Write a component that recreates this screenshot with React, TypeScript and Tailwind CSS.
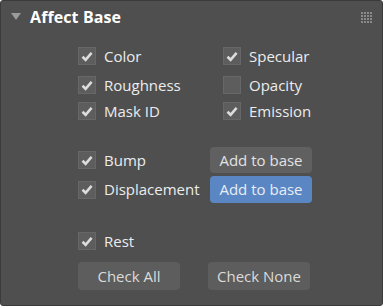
import { useState } from "react";

const font = { fontFamily: '"Open Sans", "Noto Sans", sans-serif' };

function Check({ label, checked, onToggle }: { label: string; checked: boolean; onToggle: () => void }) {
  return (
    <label className="flex items-center gap-2 h-[18px] cursor-pointer select-none" onClick={onToggle}>
      <span className="w-[18px] h-[18px] bg-[#5d5d5d] border border-[#676767] flex items-center justify-center">
        {checked && (
          <svg width="12" height="11" viewBox="0 0 12 11">
            <path d="M1.5 5.8 L4.6 8.8 L10.6 1.8" fill="none" stroke="#dcdcdc" strokeWidth="2.6" strokeLinejoin="miter" />
          </svg>
        )}
      </span>
      <span className="text-[15px] text-[#ececec] leading-none">{label}</span>
    </label>
  );
}

function Btn({ children, blue }: { children: string; blue?: boolean }) {
  return (
    <button
      className={`w-[102px] rounded-[4px] text-[15px] leading-none ${blue ? "bg-[#5a86c3] text-[#e8edf5] h-[27px]" : "bg-[#606060] text-[#e2e2e2] h-[26px]"}`}
    >
      {children}
    </button>
  );
}

export default function App() {
  const [state, setState] = useState<Record<string, boolean>>({
    Color: true,
    Specular: true,
    Roughness: true,
    Opacity: false,
    "Mask ID": true,
    Emission: true,
    Bump: true,
    Displacement: true,
    Rest: true,
  });
  const toggle = (k: string) => setState((s) => ({ ...s, [k]: !s[k] }));
  const c = (k: string) => <Check label={k} checked={state[k]} onToggle={() => toggle(k)} />;

  return (
    <div className="w-[383px] h-[306px] bg-[#4f4f4f] border border-[#3b3b3b] rounded-[3px] relative" style={font}>
      <div className="flex items-center h-[32px] pl-[10px] pr-[10px]">
        <svg width="10" height="8" viewBox="0 0 10 8" className="mr-[9px]">
          <path d="M0 0 H10 L5 7 Z" fill="#9a9a9a" />
        </svg>
        <span className="text-[16px] font-bold text-white tracking-[0.1px]">Affect Base</span>
        <div className="ml-auto grid grid-cols-4 gap-[1px]">
          {Array.from({ length: 16 }).map((_, i) => (
            <span key={i} className="w-[2px] h-[2px] bg-[#8a8a8a]" />
          ))}
        </div>
      </div>

      <div className="pl-[77px]">
        <div className="grid grid-cols-[145px_1fr] mt-[14px]">
          {c("Color")}
          {c("Specular")}
        </div>
        <div className="grid grid-cols-[145px_1fr] mt-[11px]">
          {c("Roughness")}
          {c("Opacity")}
        </div>
        <div className="grid grid-cols-[145px_1fr] mt-[8px]">
          {c("Mask ID")}
          {c("Emission")}
        </div>

        <div className="flex flex-col gap-[3px] mt-[27px] w-[234px]">
          <div className="flex items-center justify-between">
            {c("Bump")}
            <Btn>Add to base</Btn>
          </div>
          <div className="flex items-center justify-between">
            {c("Displacement")}
            <Btn blue>Add to base</Btn>
          </div>
        </div>

        <div className="mt-[29px]">{c("Rest")}</div>

        <div className="flex gap-[28px] mt-[12px]">
          <button className="w-[102px] h-[28px] rounded-[4px] bg-[#5d5d5d] text-[15px] text-[#dadada] leading-none">Check All</button>
          <button className="w-[102px] h-[28px] rounded-[4px] bg-[#5d5d5d] text-[15px] text-[#dadada] leading-none">Check None</button>
        </div>
      </div>
    </div>
  );
}
